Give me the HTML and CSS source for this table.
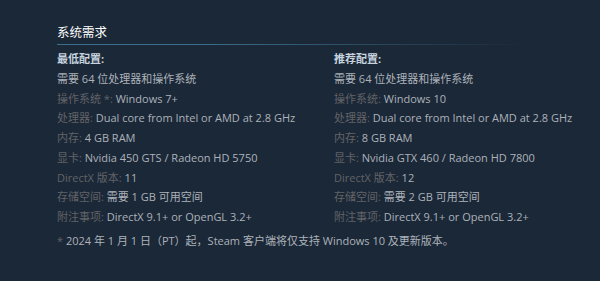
FILE: index.html
```html
<!DOCTYPE html>
<html lang="zh-CN">
<head>
    <meta charset="UTF-8">
    <title>系统需求</title>
    <link rel="stylesheet" href="styles.css">
</head>
<body>
    <div class="sys-req">
        <h2>系统需求</h2>

        <div class="columns">
            <div class="col">
                <ul>
                    <li class="col-title">最低配置:</li>
                    <li>需要 64 位处理器和操作系统</li>
                    <li><span class="label">操作系统 *:</span> Windows 7+</li>
                    <li><span class="label">处理器:</span> Dual core from Intel or AMD at 2.8 GHz</li>
                    <li><span class="label">内存:</span> 4 GB RAM</li>
                    <li><span class="label">显卡:</span> Nvidia 450 GTS / Radeon HD 5750</li>
                    <li><span class="label">DirectX 版本:</span> 11</li>
                    <li><span class="label">存储空间:</span> 需要 1 GB 可用空间</li>
                    <li><span class="label">附注事项:</span> DirectX 9.1+ or OpenGL 3.2+</li>
                </ul>
            </div>
            <div class="col">
                <ul>
                    <li class="col-title">推荐配置:</li>
                    <li>需要 64 位处理器和操作系统</li>
                    <li><span class="label">操作系统:</span> Windows 10</li>
                    <li><span class="label">处理器:</span> Dual core from Intel or AMD at 2.8 GHz</li>
                    <li><span class="label">内存:</span> 8 GB RAM</li>
                    <li><span class="label">显卡:</span> Nvidia GTX 460 / Radeon HD 7800</li>
                    <li><span class="label">DirectX 版本:</span> 12</li>
                    <li><span class="label">存储空间:</span> 需要 2 GB 可用空间</li>
                    <li><span class="label">附注事项:</span> DirectX 9.1+ or OpenGL 3.2+</li>
                </ul>
            </div>
        </div>

        <p class="note"><span class="label">*</span> 2024 年 1 月 1 日（PT）起，Steam 客户端将仅支持 Windows 10 及更新版本。</p>
    </div>
</body>
</html>
```

FILE: styles.css
```css
* {
    margin: 0;
    padding: 0;
    box-sizing: border-box;
}

body {
    background: #1b2838;
    color: #acb2b8;
    font-family: "Open Sans", "Noto Sans CJK SC", sans-serif;
    font-size: 11px;
}

.sys-req {
    padding: 24px 0 0 57px;
}

h2 {
    font-size: 12.5px;
    font-weight: normal;
    color: #ffffff;
    line-height: 18px;
    padding-bottom: 2px;
    margin-bottom: 4px;
    width: 470px;
    border-bottom: 1px solid transparent;
    border-image: linear-gradient(to right, #3b6e8c 0%, #3b6e8c 30%, rgba(59, 110, 140, 0) 100%) 1;
}

.columns {
    display: flex;
}

.col {
    flex: none;
    width: 277px;
}

ul {
    list-style: none;
}

li {
    line-height: 19.75px;
    white-space: nowrap;
}

.col-title {
    color: #c6d4df;
    font-weight: bold;
}

.label {
    color: #626366;
}

.note {
    margin-top: 5px;
    line-height: 18px;
    white-space: nowrap;
}
```
